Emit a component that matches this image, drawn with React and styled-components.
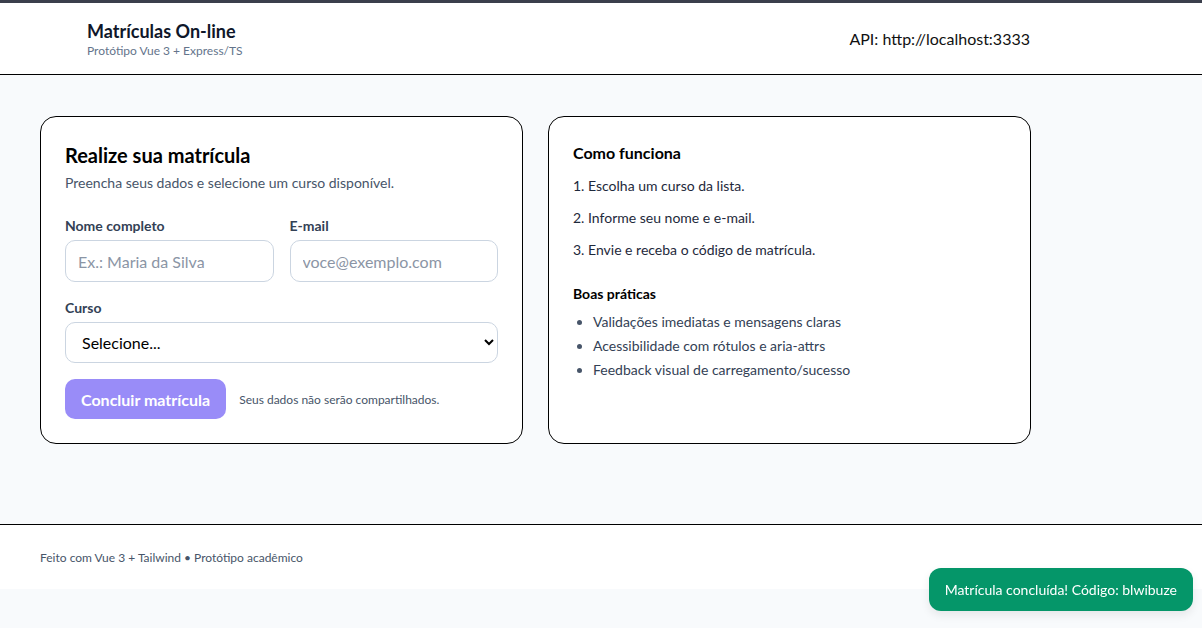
import React from 'react';
import styled, { createGlobalStyle } from 'styled-components';

const GlobalStyle = createGlobalStyle`
  * { box-sizing: border-box; }
  body {
    margin: 0;
    background: #f8fafc;
    font-family: Lato, "Noto Sans", sans-serif;
    color: #0f172a;
  }
`;

const TopBar = styled.div`
  height: 3px;
  background: #3b3f4c;
`;

const Header = styled.header`
  background: #fff;
  border-bottom: 1px solid #000;
  height: 72px;
  display: flex;
  align-items: center;
  justify-content: space-between;
  padding: 0 172px 0 87px;
`;

const Brand = styled.div`
  display: flex;
  flex-direction: column;
`;

const BrandTitle = styled.h1`
  margin: 0;
  font-size: 18px;
  font-weight: 700;
  line-height: 24px;
  color: #0f172a;
`;

const BrandSub = styled.span`
  font-size: 12px;
  line-height: 16px;
  color: #64748b;
`;

const ApiInfo = styled.span`
  font-size: 16px;
  color: #111;
`;

const Main = styled.main`
  height: 449px;
  padding: 41px 40px 0;
  display: flex;
  gap: 25px;
  align-items: flex-start;
`;

const Card = styled.section`
  width: 483px;
  height: 328px;
  background: #fff;
  border: 1px solid #000;
  border-radius: 16px;
  padding: 24px;
`;

const FormTitle = styled.h2`
  margin: 0;
  font-size: 20px;
  font-weight: 700;
  line-height: 28px;
  color: #000;
`;

const FormSub = styled.p`
  margin: 4px 0 0;
  font-size: 14px;
  line-height: 20px;
  color: #475569;
`;

const FieldRow = styled.div`
  display: grid;
  grid-template-columns: 1fr 1fr;
  gap: 16px;
  margin-top: ${p => p.$top || 16}px;
`;

const Field = styled.label`
  display: flex;
  flex-direction: column;
  gap: 4px;
  margin-top: ${p => p.$top || 0}px;
`;

const Label = styled.span`
  font-size: 14px;
  font-weight: 700;
  line-height: 20px;
  color: #334155;
`;

const Input = styled.input`
  height: 42px;
  width: 100%;
  border: 1px solid #cbd5e1;
  border-radius: 10px;
  padding: 0 12px;
  font-family: inherit;
  font-size: 16px;
  background: #fff;
  &::placeholder { color: #8b95a5; }
`;

const Select = styled.select`
  height: 41px;
  width: 100%;
  border: 1px solid #cbd5e1;
  border-radius: 10px;
  padding: 0 12px;
  font-family: inherit;
  font-size: 16px;
  color: #000;
  background: #fff;
`;

const Actions = styled.div`
  display: flex;
  align-items: center;
  gap: 13px;
  margin-top: 16px;
`;

const SubmitButton = styled.button`
  height: 40px;
  padding: 0 16px;
  border: none;
  border-radius: 10px;
  background: #998cf8;
  color: #fff;
  font-family: inherit;
  font-size: 16px;
  font-weight: 700;
`;

const Hint = styled.span`
  font-size: 12px;
  color: #475569;
`;

const InfoTitle = styled.h3`
  margin: 0;
  font-size: 16px;
  font-weight: 700;
  line-height: 24px;
  color: #000;
`;

const Steps = styled.ol`
  list-style: none;
  margin: 11px 0 0;
  padding: 0;
  display: flex;
  flex-direction: column;
  gap: 12px;
`;

const Step = styled.li`
  font-size: 14px;
  line-height: 20px;
  color: #1e293b;
`;

const SubTitle = styled.h4`
  margin: 24px 0 0;
  font-size: 14px;
  font-weight: 700;
  line-height: 20px;
  color: #000;
`;

const Bullets = styled.ul`
  margin: 8px 0 0;
  padding-left: 20px;
  display: flex;
  flex-direction: column;
  gap: 4px;
`;

const Bullet = styled.li`
  font-size: 14px;
  line-height: 20px;
  color: #334155;
  &::marker { color: #475569; }
`;

const Footer = styled.footer`
  background: #fff;
  border-top: 1px solid #000;
  height: 65px;
  padding: 0 40px;
  display: flex;
  align-items: center;
  font-size: 12px;
  color: #475569;
`;

const Toast = styled.div`
  position: fixed;
  right: 9px;
  bottom: 17px;
  height: 43px;
  padding: 0 16px;
  display: flex;
  align-items: center;
  background: #059669;
  color: #fff;
  border-radius: 12px;
  font-size: 14px;
  box-shadow: 0 4px 10px rgba(0, 0, 0, 0.08);
`;

const App = () => {
  return (
    <>
      <GlobalStyle />
      <TopBar />
      <Header>
        <Brand>
          <BrandTitle>Matrículas On-line</BrandTitle>
          <BrandSub>Protótipo Vue 3 + Express/TS</BrandSub>
        </Brand>
        <ApiInfo>API: http://localhost:3333</ApiInfo>
      </Header>
      <Main>
        <Card>
          <FormTitle>Realize sua matrícula</FormTitle>
          <FormSub>Preencha seus dados e selecione um curso disponível.</FormSub>
          <FieldRow $top={23}>
            <Field>
              <Label>Nome completo</Label>
              <Input placeholder="Ex.: Maria da Silva" />
            </Field>
            <Field>
              <Label>E-mail</Label>
              <Input placeholder="voce@exemplo.com" />
            </Field>
          </FieldRow>
          <Field $top={16}>
            <Label>Curso</Label>
            <Select defaultValue="">
              <option value="">Selecione...</option>
            </Select>
          </Field>
          <Actions>
            <SubmitButton>Concluir matrícula</SubmitButton>
            <Hint>Seus dados não serão compartilhados.</Hint>
          </Actions>
        </Card>
        <Card>
          <InfoTitle>Como funciona</InfoTitle>
          <Steps>
            <Step>1. Escolha um curso da lista.</Step>
            <Step>2. Informe seu nome e e-mail.</Step>
            <Step>3. Envie e receba o código de matrícula.</Step>
          </Steps>
          <SubTitle>Boas práticas</SubTitle>
          <Bullets>
            <Bullet>Validações imediatas e mensagens claras</Bullet>
            <Bullet>Acessibilidade com rótulos e aria-attrs</Bullet>
            <Bullet>Feedback visual de carregamento/sucesso</Bullet>
          </Bullets>
        </Card>
      </Main>
      <Footer>Feito com Vue 3 + Tailwind • Protótipo acadêmico</Footer>
      <Toast>Matrícula concluída! Código: blwibuze</Toast>
    </>
  );
};

export default App;
